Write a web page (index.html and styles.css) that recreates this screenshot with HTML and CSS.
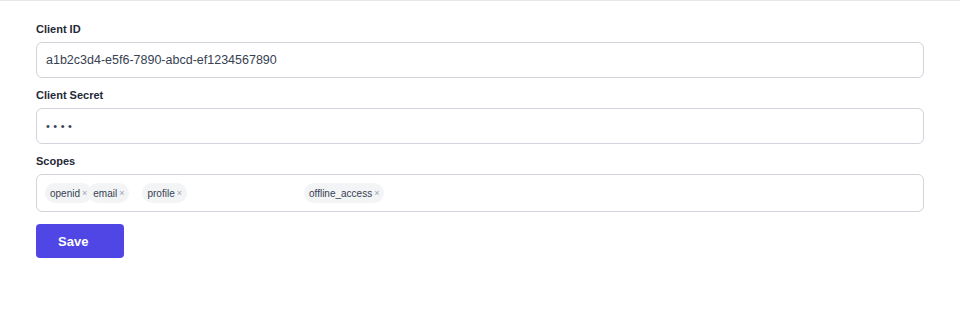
FILE: index.html
```html
<!DOCTYPE html>
<html>
<head>
  <title>Client settings</title>
  <link rel="stylesheet" href="styles.css">
</head>
<body>

  <form class="settings">
    <label class="field-label">Client ID</label>
    <input type="text" class="field-input" value="a1b2c3d4-e5f6-7890-abcd-ef1234567890">

    <label class="field-label">Client Secret</label>
    <input type="password" class="field-input secret" value="abcd">

    <label class="field-label">Scopes</label>
    <div class="scopes">
      <span class="chip">openid<span class="chip-x">×</span></span>
      <span class="chip chip-tight">email<span class="chip-x">×</span></span>
      <span class="chip chip-gap">profile<span class="chip-x">×</span></span>
      <span class="chip chip-far">offline_access<span class="chip-x">×</span></span>
    </div>

    <button type="button" class="save-btn">Save</button>
  </form>

</body>
</html>
```

FILE: styles.css
```css
body {
  font-family: "Liberation Sans", Arial, sans-serif;
  margin: 0;
  background: #fff;
  border-top: 1px solid #e5e7eb;
}
.settings {
  display: flex;
  flex-direction: column;
  padding: 18px 36px 0 36px;
}
.field-label {
  font-size: 11px;
  font-weight: 700;
  color: #1f2937;
  line-height: 13px;
  margin: 4px 0 6px 0;
}
.field-input {
  height: 36px;
  box-sizing: border-box;
  border: 1px solid #d1d5db;
  border-radius: 6px;
  padding: 0 9px;
  font-family: inherit;
  font-size: 12.5px;
  color: #374151;
  margin: 0 0 7px 0;
  outline: none;
}
.secret {
  letter-spacing: 3.5px;
  font-size: 11px;
}
.scopes {
  display: flex;
  align-items: center;
  height: 38px;
  box-sizing: border-box;
  border: 1px solid #d1d5db;
  border-radius: 6px;
  padding: 0 8px;
  margin-bottom: 12px;
}
.chip {
  display: inline-flex;
  align-items: center;
  height: 20px;
  padding: 0 5px;
  background: #f3f4f6;
  border-radius: 10px;
  font-size: 10px;
  color: #374151;
}
.chip-x {
  color: #9ca3af;
  font-size: 9px;
  margin-left: 2px;
}
.chip-tight {
  margin-left: -4px;
}
.chip-gap {
  margin-left: 13px;
}
.chip-far {
  margin-left: 117px;
}
.save-btn {
  align-self: flex-start;
  width: 88px;
  height: 34px;
  background-color: #4f46e5;
  color: #fff;
  border: none;
  border-radius: 4px;
  font-family: inherit;
  font-size: 13px;
  font-weight: 700;
  text-align: left;
  padding: 0 0 0 22px;
  cursor: pointer;
}
```
